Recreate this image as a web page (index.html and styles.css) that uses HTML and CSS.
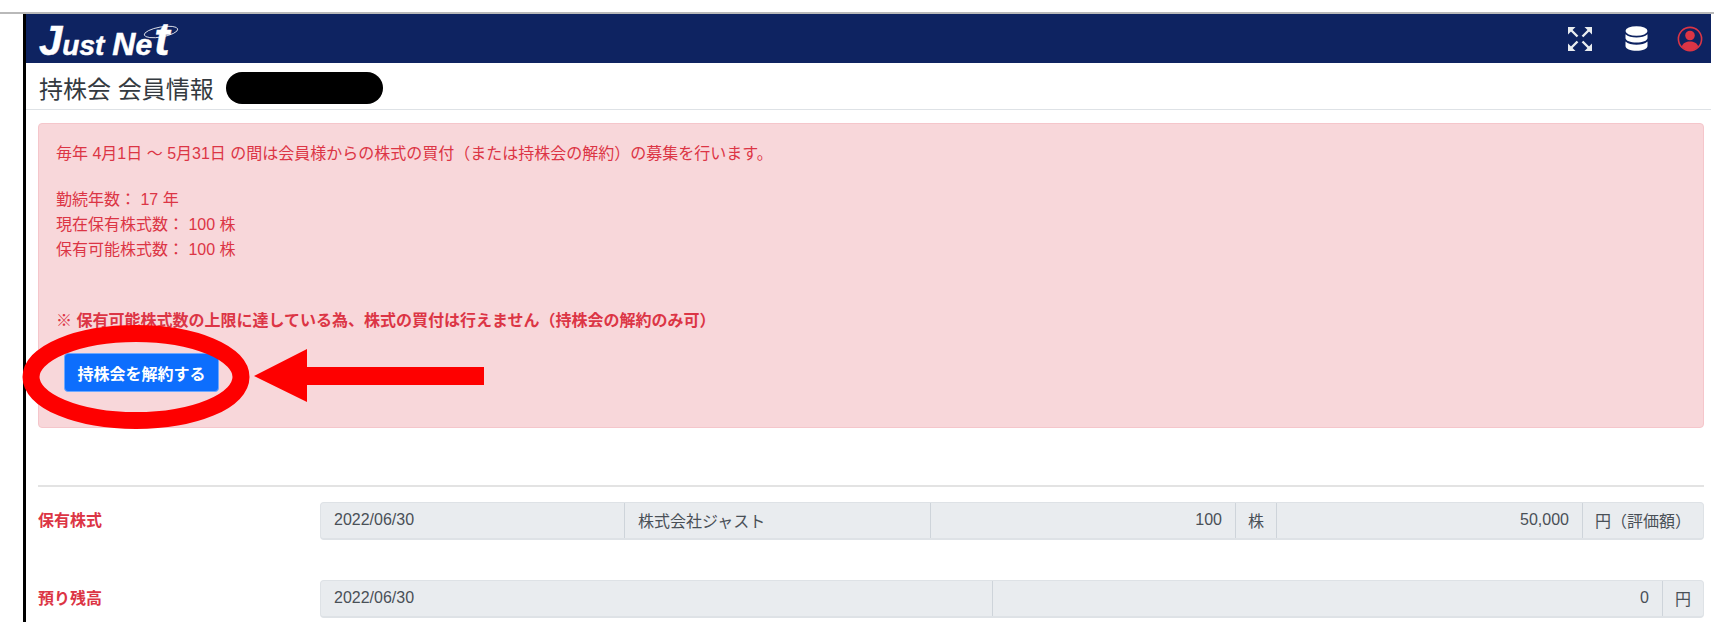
FILE: index.html
```html
<!DOCTYPE html>
<html lang="ja">
<head>
  <meta charset="UTF-8">
  <title>持株会 会員情報</title>
  <link rel="stylesheet" href="styles.css">
</head>
<body>
  <div class="topline"></div>
  <div class="frame">
    <header class="navbar">
      <div class="logo">
        <span class="logo-j">J</span><span class="logo-s">ust</span><span class="logo-n">N</span><span class="logo-e">e</span><span class="logo-t">t</span>
        <svg class="logo-ring" width="40" height="20" viewBox="0 0 40 20"><ellipse cx="20" cy="10" rx="17" ry="5" fill="none" stroke="#fff" stroke-width="0.8" transform="rotate(-10 20 10)"/></svg>
      </div>
      <div class="nav-icons">
        <svg class="icon-expand" width="26" height="26" viewBox="0 0 26 26" fill="#e9ecef" stroke="#e9ecef">
          <path d="M1 1h7.500L1 8.500z" stroke="none"/>
          <path d="M25 1h-7.500L25 8.500z" stroke="none"/>
          <path d="M1 25h7.500L1 17.500z" stroke="none"/>
          <path d="M25 25h-7.500L25 17.500z" stroke="none"/>
          <path d="M4 4l6.500 6.500M22 4l-6.500 6.500M4 22l6.500-6.500M22 22l-6.500-6.500" stroke-width="2.400" fill="none"/>
        </svg>
        <svg class="icon-db" width="23" height="25" viewBox="0 0 23 25" fill="#fff">
          <ellipse cx="11.500" cy="5" rx="11" ry="4.800"/>
          <path d="M.5 8.200c2.300 2.300 6.600 3.300 11 3.300s8.700-1 11-3.300V12c0 2.700-4.900 4.600-11 4.600S.5 14.700.5 12z"/>
          <path d="M.5 15.400c2.300 2.300 6.600 3.300 11 3.300s8.700-1 11-3.300V20c0 2.700-4.900 4.800-11 4.800S.5 22.700.5 20z"/>
        </svg>
        <svg class="icon-user" width="26" height="26" viewBox="0 0 26 26">
          <circle cx="13" cy="13" r="11.600" fill="none" stroke="#dc3545" stroke-width="1.600"/>
          <circle cx="13" cy="9.500" r="4.800" fill="#dc3545"/>
          <path d="M4.800 20.500c1.200-3.600 4.300-5 8.200-5s7 1.400 8.200 5C19 23.200 16.200 24.400 13 24.400S7 23.200 4.800 20.500z" fill="#dc3545"/>
        </svg>
      </div>
    </header>

    <div class="page-title">
      <h1>持株会 会員情報</h1>
      <span class="redacted"></span>
    </div>

    <main class="content">
      <div class="alert">
        <p class="notice">毎年 4月1日 ～ 5月31日 の間は会員様からの株式の買付（または持株会の解約）の募集を行います。</p>
        <p class="stats">勤続年数： 17 年<br>現在保有株式数： 100 株<br>保有可能株式数： 100 株</p>
        <p class="warning">※ 保有可能株式数の上限に達している為、株式の買付は行えません（持株会の解約のみ可）</p>
        <button class="btn">持株会を解約する</button>
      </div>

      <hr class="divider">

      <div class="row row-stock">
        <div class="row-label">保有株式</div>
        <div class="group">
          <div class="cell">2022/06/30</div>
          <div class="cell">株式会社ジャスト</div>
          <div class="cell cell-num">100</div>
          <div class="cell cell-unit">株</div>
          <div class="cell cell-num">50,000</div>
          <div class="cell cell-unit">円（評価額）</div>
        </div>
      </div>

      <div class="row row-balance">
        <div class="row-label">預り残高</div>
        <div class="group">
          <div class="cell">2022/06/30</div>
          <div class="cell cell-num">0</div>
          <div class="cell cell-unit">円</div>
        </div>
      </div>
    </main>
  </div>

  <!-- 赤い注釈 -->
  <svg class="markup" width="1714" height="622" viewBox="0 0 1714 622">
    <ellipse cx="136" cy="377" rx="105" ry="43.500" fill="none" stroke="#fe0000" stroke-width="17"/>
    <path d="M254 376l53-27v18h177v18H307v17z" fill="#fe0000"/>
  </svg>
</body>
</html>
```

FILE: styles.css
```css
html, body {
  height: 622px;
  overflow: hidden;
}

body {
  margin: 0;
  position: relative;
  background-color: #fff;
  font-family: "Liberation Sans", "Noto Sans CJK JP", sans-serif;
  font-size: 16px;
  color: #495057;
}

.topline {
  height: 2px;
  margin-top: 12px;
  background-color: #b9b9b9;
}

.frame {
  margin: 0 3px 0 23px;
  height: 608px;
  border-left: 3px solid #000;
}

.navbar {
  height: 49px;
  padding: 0 8px 0 13px;
  display: flex;
  align-items: center;
  justify-content: space-between;
  background-color: #0e2361;
}

.logo {
  position: relative;
  display: flex;
  align-items: baseline;
  width: 135px;
  height: 40px;
  color: #fff;
  font-family: "Liberation Sans", sans-serif;
  font-weight: bold;
  font-style: italic;
  line-height: 40px;
  -webkit-text-stroke: 0.5px #fff;
}

.logo-j {
  font-size: 42px;
}

.logo-s {
  font-size: 28px;
}

.logo-n {
  margin-left: 8px;
  font-size: 32px;
}

.logo-e {
  font-size: 30px;
}

.logo-t {
  margin-left: 2px;
  font-size: 46px;
}

.logo-ring {
  position: absolute;
  left: 102px;
  top: 3px;
}

.nav-icons {
  display: flex;
  align-items: center;
}

.icon-expand {
  margin-right: 32px;
}

.icon-db {
  margin-right: 29px;
}

.page-title {
  height: 46px;
  padding-left: 13px;
  display: flex;
  align-items: center;
  gap: 12px;
  border-bottom: 1px solid #dee2e6;
}

.page-title h1 {
  margin: 2px 0 0;
  font-size: 24px;
  font-weight: normal;
  color: #343a40;
}

.redacted {
  width: 157px;
  height: 32px;
  margin-top: 4px;
  border-radius: 16px;
  background-color: #000;
}

.content {
  padding: 13px 7px 0 12px;
}

.alert {
  box-sizing: border-box;
  height: 305px;
  padding: 17px 17px;
  background-color: #f8d7da;
  border: 1px solid #f5c6cb;
  border-radius: 4px;
  color: #dc3545;
  line-height: 25px;
}

.alert p {
  margin: 0;
}

.alert .notice {
  margin-bottom: 21px;
}

.alert .warning {
  margin-top: 46px;
  font-weight: bold;
}

.btn {
  display: block;
  width: 155px;
  height: 39px;
  margin: 20px 0 0 8px;
  padding: 0;
  border: 1px solid #6ea8fe;
  border-radius: 4px;
  background-color: #0d6efd;
  color: #fff;
  font-family: inherit;
  font-size: 16px;
  font-weight: bold;
}

.divider {
  margin: 57px 0 15px;
  border: 0;
  border-top: 2px solid #e3e3e3;
}

.row {
  display: flex;
  align-items: center;
  height: 38px;
}

.row-balance {
  margin-top: 40px;
}

.row-label {
  width: 282px;
  flex-shrink: 0;
  padding-bottom: 4px;
  color: #dc3545;
  font-weight: bold;
}

.group {
  flex: 1;
  height: 100%;
  box-sizing: border-box;
  display: grid;
  border: 1px solid #dee2e6;
  border-bottom-width: 2px;
  border-radius: 4px;
  background-color: #e9ecef;
}

.row-stock .group {
  grid-template-columns: 303px 306px 305px 41px 306px 1fr;
}

.row-balance .group {
  grid-template-columns: 671px 670px 1fr;
}

.cell {
  display: flex;
  align-items: center;
  padding: 0 13px 1px;
  border-left: 1px solid #ced4da;
  white-space: nowrap;
}

.cell:first-child {
  border-left: 0;
}

.cell-num {
  justify-content: flex-end;
}

.cell-unit {
  padding: 0 0 1px 12px;
}

.markup {
  position: absolute;
  left: 0;
  top: 0;
  pointer-events: none;
}
```
